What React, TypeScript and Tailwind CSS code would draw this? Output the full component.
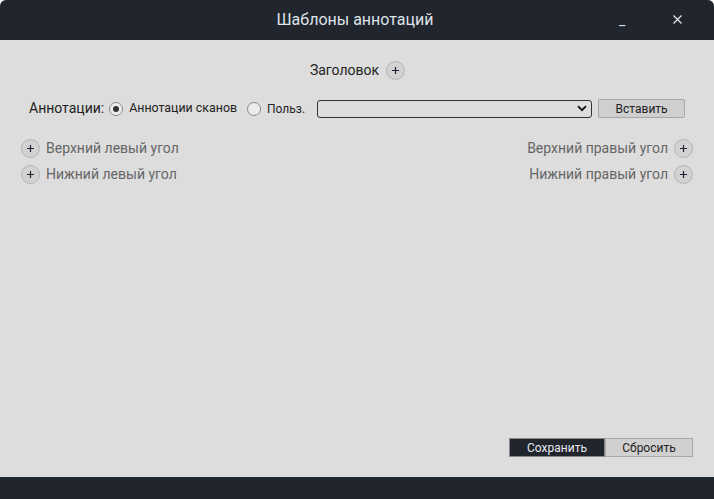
import React from "react";

function Plus({ className = "" }: { className?: string }) {
  return (
    <span
      className={
        "flex h-[19px] w-[19px] items-center justify-center rounded-full border border-[#b4b4b4] bg-[#d2d2d2] text-[13px] leading-none text-[#222] " +
        className
      }
    >
      <svg width="9" height="9" viewBox="0 0 9 9">
        <path d="M4.5 1v7M1 4.5h7" stroke="#1f2430" strokeWidth="1.2" />
      </svg>
    </span>
  );
}

function Radio({ checked }: { checked?: boolean }) {
  return (
    <span className="flex h-[14px] w-[14px] items-center justify-center rounded-full border border-[#8a8a8a] bg-[#ececec]">
      {checked && <span className="h-[6px] w-[6px] rounded-full bg-[#333]" />}
    </span>
  );
}

export default function App() {
  return (
    <div
      className="flex h-[499px] w-[714px] flex-col bg-white"
      style={{ fontFamily: "Roboto, 'Liberation Sans', sans-serif" }}
    >
      <div className="flex h-[499px] flex-col overflow-hidden rounded-tl-[6px] rounded-tr-[6px] bg-[#dddddd]">
        <div className="relative flex h-[40px] shrink-0 items-center justify-center bg-[#21252d]">
          <span className="pr-[4px] text-[16px] text-[#dfe3ea]">Шаблоны аннотаций</span>
          <span className="absolute left-[619px] top-[10px] text-[14px] text-[#d8dce3]">_</span>
          <svg className="absolute left-[673px] top-[15px]" width="9" height="9" viewBox="0 0 9 9">
            <path d="M0.5 0.5l8 8M8.5 0.5l-8 8" stroke="#e6e8ec" strokeWidth="1.2" />
          </svg>
        </div>

        <div className="flex flex-1 flex-col px-[20px] pt-[20px]">
          <div className="flex items-center justify-center gap-[7px] pl-[1px]">
            <span className="text-[14px] text-[#222]">Заголовок</span>
            <Plus />
          </div>

          <div className="mt-[17px] flex items-center pl-[9px]">
            <span className="text-[14px] text-[#222]">Аннотации:</span>
            <span className="ml-[5px]"><Radio checked /></span>
            <span className="ml-[6px] text-[12.4px] text-[#222]">Аннотации сканов</span>
            <span className="ml-[10px]"><Radio /></span>
            <span className="ml-[6px] text-[12px] text-[#222]">Польз.</span>
            <div className="ml-[12px] flex h-[18px] w-[275px] items-center justify-end rounded-[3px] border border-[#333] bg-[#dddddd] pr-[4px]">
              <svg width="10" height="7" viewBox="0 0 10 7">
                <path d="M1 1.2l4 4 4-4" stroke="#111" strokeWidth="1.8" fill="none" />
              </svg>
            </div>
            <div className="ml-[6px] flex h-[19px] w-[87px] items-center justify-center rounded-[2px] border border-[#a8a8a8] bg-[#cfcfcf] text-[12px] text-[#222]">
              Вставить
            </div>
          </div>

          <div className="mt-[19px] flex items-center justify-between">
            <div className="flex items-center gap-[6px] pl-[1px]">
              <Plus />
              <span className="text-[14px] text-[#666]">Верхний левый угол</span>
            </div>
            <div className="flex items-center gap-[6px] pr-[1px]">
              <span className="text-[14px] text-[#666]">Верхний правый угол</span>
              <Plus />
            </div>
          </div>
          <div className="mt-[5px] flex items-center justify-between">
            <div className="flex items-center gap-[6px] pl-[1px]">
              <Plus />
              <span className="text-[14px] text-[#666]">Нижний левый угол</span>
            </div>
            <div className="flex items-center gap-[6px] pr-[1px]">
              <span className="text-[14px] text-[#666]">Нижний правый угол</span>
              <Plus />
            </div>
          </div>

          <div className="flex-1" />

          <div className="mb-[20px] flex justify-end pr-[1px]">
            <div className="flex h-[19px] w-[96px] items-center justify-center border border-[#888] bg-[#21252d] text-[12px] text-[#e8eaee]">
              Сохранить
            </div>
            <div className="flex h-[19px] w-[88px] items-center justify-center border border-[#a8a8a8] bg-[#d0d0d0] text-[12px] text-[#222]">
              Сбросить
            </div>
          </div>
        </div>

        <div className="h-[22px] shrink-0 bg-[#21252d]" />
      </div>
    </div>
  );
}
